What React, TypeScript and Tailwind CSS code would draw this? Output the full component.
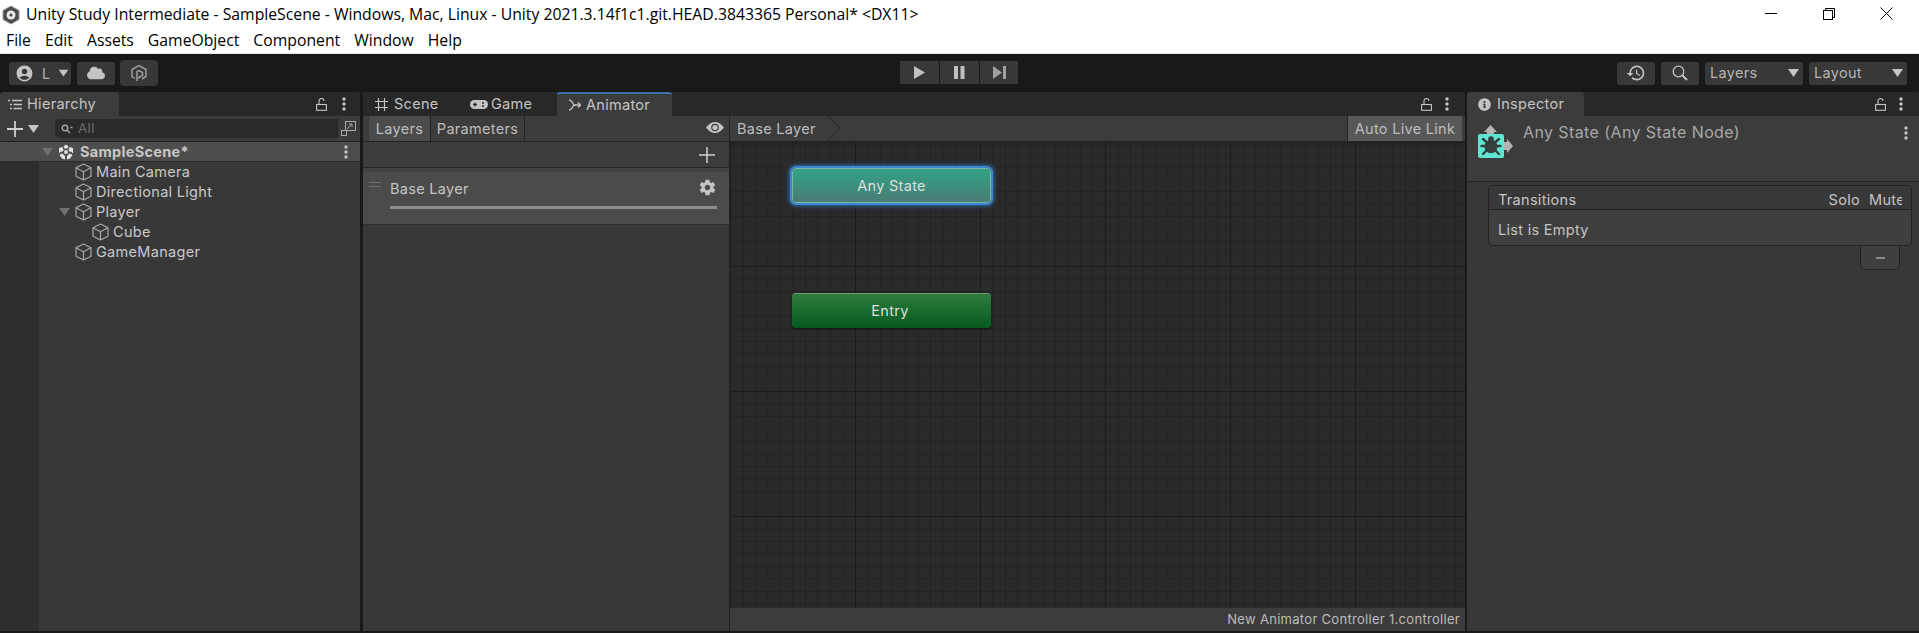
import React from "react";
import { FaCloud, FaInfoCircle } from "react-icons/fa";
import { IoMdSettings } from "react-icons/io";
import { MdAccountCircle, MdHistory } from "react-icons/md";

const ui = "font-['Inter','Liberation_Sans',sans-serif] tracking-[0.3px]";
const win = "font-['Open_Sans','Noto_Sans',sans-serif] tracking-normal";

function Dots({ className = "" }: { className?: string }) {
  return (
    <svg width="4" height="14" viewBox="0 0 4 14" className={className} fill="#c4c4c4">
      <circle cx="2" cy="2" r="1.700" />
      <circle cx="2" cy="7" r="1.700" />
      <circle cx="2" cy="12" r="1.700" />
    </svg>
  );
}

function Lock() {
  return (
    <svg width="11" height="13" viewBox="0 0 11 13" fill="none" stroke="#c4c4c4" strokeWidth="1.100">
      <rect x="0.600" y="6.500" width="9.800" height="5.800" />
      <path d="M3 6.500V3a2.500 2.500 0 0 1 5 0" />
    </svg>
  );
}

function Cube() {
  return (
    <svg width="17" height="18" viewBox="0 0 17 18" fill="none" stroke="#a8a8a8" strokeWidth="1.200" strokeLinejoin="round" className="shrink-0">
      <path d="M8.500 1 16 4.800v8.400L8.500 17 1 13.200V4.800Z" />
      <path d="M1 4.800 8.500 8.800 16 4.800M8.500 8.800V17" />
    </svg>
  );
}

function Tri({ className = "", color = "#6f6f6f" }: { className?: string; color?: string }) {
  return (
    <svg width="11" height="8" viewBox="0 0 11 8" className={className}>
      <path d="M0 0h11L5.500 8Z" fill={color} />
    </svg>
  );
}

function UnityMark({ size = 16, color = "#e4e4e4" }: { size?: number; color?: string }) {
  return (
    <svg width={size} height={size} viewBox="0 0 16 16" fill={color}>
      <path d="M8 0.500 10.500 2.500 9 5 8 4.200 7 5 5.500 2.500Z" />
      <path d="M1 4 4.500 3 5.500 6 4.200 7.800H2.500L1 9.500Z" />
      <path d="M15 4 11.500 3 10.500 6 11.800 7.800H13.500L15 9.500Z" />
      <path d="M1.500 11 4 9.500 5.500 10.500 7 12 7 15.500 4 14.500Z" />
      <path d="M14.500 11 12 9.500 10.500 10.500 9 12 9 15.500 12 14.500Z" />
      <rect x="6.300" y="6.300" width="3.400" height="3.400" />
    </svg>
  );
}

function TreeRow({ label, indent = 0, arrow = false }: { label: string; indent?: number; arrow?: boolean }) {
  return (
    <div className={`h-5 flex items-center ${indent ? "pl-[92px]" : "pl-[75px]"} relative`}>
      {arrow && <Tri className="absolute left-[59px] top-[6px]" />}
      <Cube />
      <span className="ml-[4px] text-[14.500px] text-[#c8c8c8] leading-5">{label}</span>
    </div>
  );
}

function ToolBtn({ children, className = "" }: { children?: React.ReactNode; className?: string }) {
  return <div className={`h-[23px] flex items-center bg-[#383838] rounded-[2px] ${className}`}>{children}</div>;
}

function Dropdown({ label }: { label: string }) {
  return (
    <ToolBtn className="w-[98px] justify-between pl-[5px] pr-[4px] text-[14.500px] text-[#b4b4b4]">
      <span>{label}</span>
      <Tri color="#c4c4c4" />
    </ToolBtn>
  );
}

function TopBars() {
  return (
    <>
      <div className={`bg-white text-[15.750px] text-black ${win}`}>
        <div className="h-[27px] flex items-center pt-[2px]">
          <svg width="18" height="20" viewBox="0 0 18 20" className="ml-[2px] mr-[6px]">
            <path d="M9 1 17 5.500v9L9 19 1 14.500v-9Z" fill="#4a4a4a" stroke="#9a9a9a" />
            <circle cx="9" cy="10" r="4.500" fill="#e8e8e8" />
            <circle cx="9" cy="10" r="1.600" fill="#4a4a4a" />
          </svg>
          <span className="whitespace-nowrap">Unity Study Intermediate - SampleScene - Windows, Mac, Linux - Unity 2021.3.14f1c1.git.HEAD.3843365 Personal* &lt;DX11&gt;</span>
          <div className="ml-auto flex items-center -mt-[2px]">
            <div className="w-[58px] flex justify-center"><div className="w-3 h-px bg-black" /></div>
            <div className="w-[58px] flex justify-center">
              <svg width="12" height="12" viewBox="0 0 12 12" fill="none" stroke="#000">
                <rect x="0.500" y="2.500" width="9" height="9" />
                <path d="M2.500 2.500V0.500h9v9H9.500" />
              </svg>
            </div>
            <div className="w-[58px] flex justify-center pr-[2px]">
              <svg width="13" height="13" viewBox="0 0 13 13" stroke="#000"><path d="M0.500 0.500 12.500 12.500M12.500 0.500 0.500 12.500" /></svg>
            </div>
            <div className="w-[3px]" />
          </div>
        </div>
        <div className="h-[27px] flex items-center pl-[6px] pt-[2px] gap-[14px] border-b border-[#e8e8e8]">
          {["File", "Edit", "Assets", "GameObject", "Component", "Window", "Help"].map((m) => (
            <span key={m}>{m}</span>
          ))}
        </div>
      </div>
      <div className="h-[38px] bg-[#191919] flex items-center px-[9px] relative shrink-0">
        <ToolBtn className="w-[62px] pl-[6px] bg-[#333333]">
          <MdAccountCircle size={19} color="#c4c4c4" />
          <span className="text-[14px] text-[#b0b0b0] ml-[8px]">L</span>
          <Tri color="#c4c4c4" className="ml-[8px] scale-90" />
        </ToolBtn>
        <ToolBtn className="w-[38px] ml-[6px] bg-[#333333] justify-center"><FaCloud size={18} color="#c4c4c4" /></ToolBtn>
        <ToolBtn className="w-[38px] ml-[5px] h-[26px] rounded-[4px] bg-[#333333] justify-center">
          <svg width="18" height="18" viewBox="0 0 18 18" fill="none" stroke="#9c9c9c" strokeWidth="1.500">
            <path d="M5 14.500 2 12.500v-7L9 1.500l7 4v7l-4 2.500" />
            <path d="M7 17V7.500l2-1 3.500 2v3L8 14" />
          </svg>
        </ToolBtn>
        <div className="absolute left-[900px] top-[7px] flex gap-px">
          <ToolBtn className="w-[39px] rounded-none bg-[#383838] justify-center">
            <svg width="11" height="13" viewBox="0 0 11 13"><path d="M0 0 11 6.500 0 13Z" fill="#c0c0c0" /></svg>
          </ToolBtn>
          <ToolBtn className="w-[39px] rounded-none bg-[#383838] justify-center">
            <svg width="11" height="13" viewBox="0 0 11 13" fill="#c0c0c0"><rect x="0" width="4" height="13" /><rect x="6.500" width="4" height="13" /></svg>
          </ToolBtn>
          <ToolBtn className="w-[38px] rounded-none bg-[#2d2d2d] justify-center">
            <svg width="13" height="13" viewBox="0 0 13 13" fill="#a0a0a0"><path d="M0 0 9 6.500 0 13Z" /><rect x="10" width="3" height="13" /></svg>
          </ToolBtn>
        </div>
        <div className="ml-auto flex gap-[6px] pr-[3px]">
          <ToolBtn className="w-[38px] justify-center"><MdHistory size={20} color="#c4c4c4" /></ToolBtn>
          <ToolBtn className="w-[38px] justify-center">
            <svg width="16" height="16" viewBox="0 0 16 16" fill="none" stroke="#c4c4c4" strokeWidth="1.300">
              <circle cx="6.500" cy="6.500" r="5.300" />
              <path d="M10.500 10.500 15 15" strokeWidth="2" />
            </svg>
          </ToolBtn>
          <Dropdown label="Layers" />
          <Dropdown label="Layout" />
        </div>
      </div>
    </>
  );
}

function Hierarchy() {
  return (
    <section className="w-[361px] shrink-0 bg-[#383838] rounded-t-[3px] flex flex-col overflow-hidden border-r border-[#191919]">
      <div className="h-6 bg-[#282828] flex items-center shrink-0">
        <div className="w-[119px] h-full bg-[#3c3c3c] flex items-center pl-[8px] gap-[5px] rounded-t-[3px] text-[14.500px] text-[#c4c4c4]">
          <svg width="14" height="11" viewBox="0 0 14 11" stroke="#c4c4c4" strokeWidth="1.300">
            <path d="M4 1.500h10M5.500 5.500H14M5.500 9.500H14" />
            <path d="M0 1.500h2M2 5.500h2M2 9.500h2" />
          </svg>
          Hierarchy
        </div>
        <div className="ml-auto flex items-center gap-[15px] pr-[14px]"><Lock /><Dots /></div>
      </div>
      <div className="h-[26px] bg-[#3c3c3c] flex items-center shrink-0 border-b border-[#232323]">
        <svg width="16" height="16" viewBox="0 0 16 16" stroke="#d0d0d0" strokeWidth="1.800" className="ml-[7px]"><path d="M8 0v16M0 8h16" /></svg>
        <Tri color="#c4c4c4" className="ml-[5px]" />
        <div className="ml-[16px] w-[303px] h-[19px] bg-[#2a2a2a] rounded-[5px] flex items-center pl-[6px] text-[13.500px] text-[#6c6c6c]">
          <svg width="12" height="10" viewBox="0 0 12 10" fill="none" stroke="#a4a4a4" strokeWidth="1.400"><circle cx="4" cy="4" r="2.800" /><path d="M6 6l3 3M9.500 3.500h2" /></svg>
          <span className="ml-[5px]">All</span>
          <div className="ml-auto w-[21px] h-full bg-[#3a3a3a] rounded-r-[5px] flex items-center justify-center border-l border-[#232323]">
            <svg width="15" height="15" viewBox="0 0 15 15" fill="none" stroke="#a8a8a8"><rect x="4.500" y="0.500" width="10" height="9" /><rect x="0.500" y="9.500" width="5" height="5" /><path d="M6 8l5-5M8 3h3v3" /></svg>
          </div>
        </div>
      </div>
      <div className="flex-1 relative min-h-0">
        <div className="absolute left-0 top-0 bottom-0 w-[39px] bg-[#2e2e2e]" />
        <div className="relative">
          <div className="h-5 bg-[#4d4d4d] border-b border-[#2a2a2a] flex items-center relative">
            <Tri className="absolute left-[42px] top-[6px]" />
            <div className="absolute left-[58px] top-[2px]"><UnityMark /></div>
            <span className="ml-[80px] text-[14.500px] font-bold text-[#c8c8c8]">SampleScene*</span>
            <Dots className="absolute left-[344px] top-[3px]" />
          </div>
          <TreeRow label="Main Camera" />
          <TreeRow label="Directional Light" />
          <TreeRow label="Player" arrow />
          <TreeRow label="Cube" indent={1} />
          <TreeRow label="GameManager" />
        </div>
      </div>
    </section>
  );
}

function Animator() {
  return (
    <section className="flex-1 ml-[2px] rounded-t-[3px] bg-[#383838] flex flex-col overflow-hidden min-w-0">
      <div className="h-6 bg-[#282828] flex items-center shrink-0 text-[14.500px] text-[#c4c4c4]">
        <div className="flex items-center pl-[12px] gap-[6px] w-[104px]">
          <svg width="13" height="13" viewBox="0 0 13 13" stroke="#c4c4c4" strokeWidth="1.200"><path d="M3.500 0v13M9.500 0v13M0 3.500h13M0 9.500h13" /></svg>
          Scene
        </div>
        <div className="flex items-center gap-[3px] w-[90px] pl-[3px]">
          <svg width="18" height="11" viewBox="0 0 18 11">
            <rect x="0" y="1" width="18" height="9" rx="4.500" fill="#c4c4c4" />
            <path d="M3 5.500h4M5 3.500v4" stroke="#282828" strokeWidth="1.300" />
            <circle cx="13" cy="4" r="1" fill="#282828" />
            <circle cx="13" cy="7" r="1" fill="#282828" />
          </svg>
          Game
        </div>
        <div className="w-[115px] h-full bg-[#3c3c3c] border-t-2 border-[#3a72b0] flex items-center pl-[11px] gap-[5px] rounded-t-[3px]">
          <svg width="13" height="12" viewBox="0 0 13 12" fill="none" stroke="#c4c4c4" strokeWidth="1.400">
            <path d="M1 1c4 0 3 5 6 5h5M1 11c4 0 3-5 6-5" />
            <path d="M10 3.500 12.500 6 10 8.500" />
          </svg>
          Animator
        </div>
        <div className="ml-auto flex items-center gap-[13px] pr-[16px]"><Lock /><Dots /></div>
      </div>
      <div className="flex-1 flex min-h-0">
        <div className="w-[367px] shrink-0 flex flex-col bg-[#383838] border-r border-[#232323]">
          <div className="h-[26px] bg-[#3c3c3c] flex border-b border-[#232323] pl-[6px] text-[14.500px] text-[#bdbdbd] shrink-0 relative">
            <div className="w-[62px] bg-[#4b4b4b] border-r border-[#232323] flex items-center justify-center">Layers</div>
            <div className="w-[94px] bg-[#3c3c3c] border-r border-[#232323] flex items-center justify-center">Parameters</div>
            <svg width="18" height="11" viewBox="0 0 18 11" className="absolute left-[343px] top-[6px]">
              <path d="M0 5.500C3 1.500 6 0 9 0s6 1.500 9 5.500C15 9.500 12 11 9 11S3 9.500 0 5.500Z" fill="#c4c4c4" />
              <circle cx="9" cy="5.500" r="3.800" fill="#3c3c3c" />
              <circle cx="9" cy="5.500" r="2.600" fill="#c4c4c4" />
            </svg>
          </div>
          <div className="h-[26px] bg-[#3c3c3c] flex items-center justify-end pr-[14px] border-b border-[#232323] shrink-0">
            <svg width="16" height="16" viewBox="0 0 16 16" stroke="#d0d0d0" strokeWidth="1.500"><path d="M8 0v16M0 8h16" /></svg>
          </div>
          <div className="h-[4px] bg-[#424242] shrink-0" />
          <div className="h-[53px] bg-[#4b4b4b] border-b border-[#2e2e2e] shrink-0 relative pl-[27px] pt-[7px]">
            <div className="absolute left-[6px] top-[10px] w-3 h-[5px] border-y border-[#6e6e6e]" />
            <div className="text-[14.500px] text-[#c4c4c4] leading-5">Base Layer</div>
            <div className="mt-[7px] mr-[12px] h-[3px] bg-[#8c8c8c]" />
            <IoMdSettings size={19} color="#c4c4c4" className="absolute left-[335px] top-[6px]" />
          </div>
        </div>
        <div className="flex-1 flex flex-col min-w-0">
          <div className="h-[26px] bg-[#3c3c3c] flex items-center border-b border-[#232323] text-[14.500px] text-[#bdbdbd] shrink-0 pr-[3px]">
            <div className="h-full w-[111px] flex items-center pl-[7px] relative">
              Base Layer
              <svg width="14" height="25" viewBox="0 0 14 25" fill="none" stroke="#232323" className="absolute right-0 top-0">
                <path d="M1 0 13 12.500 1 25" />
              </svg>
            </div>
            <div className="ml-auto h-full w-[115px] bg-[#585858] border-l border-[#232323] flex items-center justify-center">Auto Live Link</div>
          </div>
          <div className="flex-1 relative min-h-0 bg-[#2a2a2a] bg-[linear-gradient(#1c1c1c_1px,transparent_1px),linear-gradient(90deg,#1c1c1c_1px,transparent_1px),linear-gradient(#232323_1px,transparent_1px),linear-gradient(90deg,#232323_1px,transparent_1px)] [background-size:125px_125px,125px_125px,12.500px_12.500px,12.500px_12.500px] [background-position:0_-1px,0_-1px,0_-1px,0_-1px]">
            <div className="absolute left-0 right-0 top-0 h-[5px] bg-[linear-gradient(#1c1c1c99,transparent)]" />
            <div className="absolute left-[62px] top-[26px] w-[199px] h-[35px] rounded-[4px] bg-[linear-gradient(#32a285,#4a7d73)] border border-[#7ab8a8] shadow-[0_0_0_2px_#3d86d2,0_0_4px_3px_#2f6aa8] flex items-center justify-center text-[14.500px] text-[#dedede]">Any State</div>
            <div className="absolute left-[62px] top-[151px] w-[199px] h-[35px] rounded-[4px] bg-[linear-gradient(#2e7c3c,#05591f)] border-t border-[#6f9c78] shadow-[0_1px_2px_#111111] flex items-center justify-center pr-[3px] text-[14.500px] text-[#dedede]">Entry</div>
          </div>
          <div className="h-[23px] bg-[#3c3c3c] flex items-center justify-end pr-[5px] text-[13px] text-[#bdbdbd] shrink-0">New Animator Controller 1.controller</div>
        </div>
      </div>
    </section>
  );
}

function Inspector() {
  return (
    <section className="w-[452px] shrink-0 ml-[2px] rounded-t-[3px] bg-[#383838] flex flex-col overflow-hidden">
      <div className="h-6 bg-[#282828] flex items-center shrink-0">
        <div className="w-[117px] h-full bg-[#3c3c3c] flex items-center pl-[11px] gap-[6px] rounded-t-[3px] text-[14.500px] text-[#c4c4c4]">
          <FaInfoCircle size={13} color="#c4c4c4" />
          Inspector
        </div>
        <div className="ml-auto flex items-center gap-[13px] pr-[16px]"><Lock /><Dots /></div>
      </div>
      <div className="h-[66px] bg-[#3c3c3c] border-b border-[#232323] relative shrink-0">
        <svg width="36" height="36" viewBox="0 0 36 36" className="absolute left-[10px] top-[8px]">
          <path d="M13.500 1 20 8H17V11H10V8H7Z" fill="#b4b4b4" />
          <path d="M30 15 36 22 30 29V26H26V18H30Z" fill="#b4b4b4" />
          <rect x="1" y="10" width="26" height="24" rx="2" fill="#5fe6d0" />
          <g stroke="#343f3d" strokeWidth="2.400" strokeLinecap="round">
            <path d="M14 22 6 15M14 22 22 15M14 22 4.500 22M14 22 23.500 22M14 22 6 30M14 22 22 30" />
          </g>
          <circle cx="14" cy="15" r="2.800" fill="#343f3d" />
          <ellipse cx="14" cy="22.500" rx="6.500" ry="6.800" fill="#343f3d" />
        </svg>
        <div className="absolute left-[56px] top-[4px] text-[16px] tracking-[0.4px] text-[#a8a8a8]">Any State (Any State Node)</div>
        <Dots className="absolute left-[437px] top-[10px]" />
      </div>
      <div className="pl-[21px] pr-[7px] pt-[3px]">
        <div className="border border-[#232323] rounded-[5px] bg-[#3f3f3f] overflow-hidden">
          <div className="h-[24px] bg-[#383838] border-b border-[#232323] flex items-center pl-[9px] pr-[9px] pt-[4px] text-[14.500px] text-[#c4c4c4]">
            <span>Transitions</span>
            <span className="ml-auto">Solo</span>
            <span className="ml-[9px] w-[33px] overflow-hidden whitespace-nowrap">Mute</span>
          </div>
          <div className="h-[35px] flex items-center pl-[9px] pt-[4px] text-[14.500px] text-[#c4c4c4]">List is Empty</div>
        </div>
        <div className="ml-auto mr-[12px] w-[40px] h-[24px] bg-[#3f3f3f] border border-t-0 border-[#232323] rounded-b-[5px] flex items-center justify-center">
          <div className="w-[9px] h-[2px] bg-[#8a8a8a]" />
        </div>
      </div>
    </section>
  );
}

export default function App() {
  return (
    <div className={`w-[1919px] h-[633px] bg-[#191919] flex flex-col overflow-hidden ${ui}`}>
      <TopBars />
      <main className="flex-1 flex min-h-0 pb-[2px]">
        <Hierarchy />
        <Animator />
        <Inspector />
      </main>
    </div>
  );
}
